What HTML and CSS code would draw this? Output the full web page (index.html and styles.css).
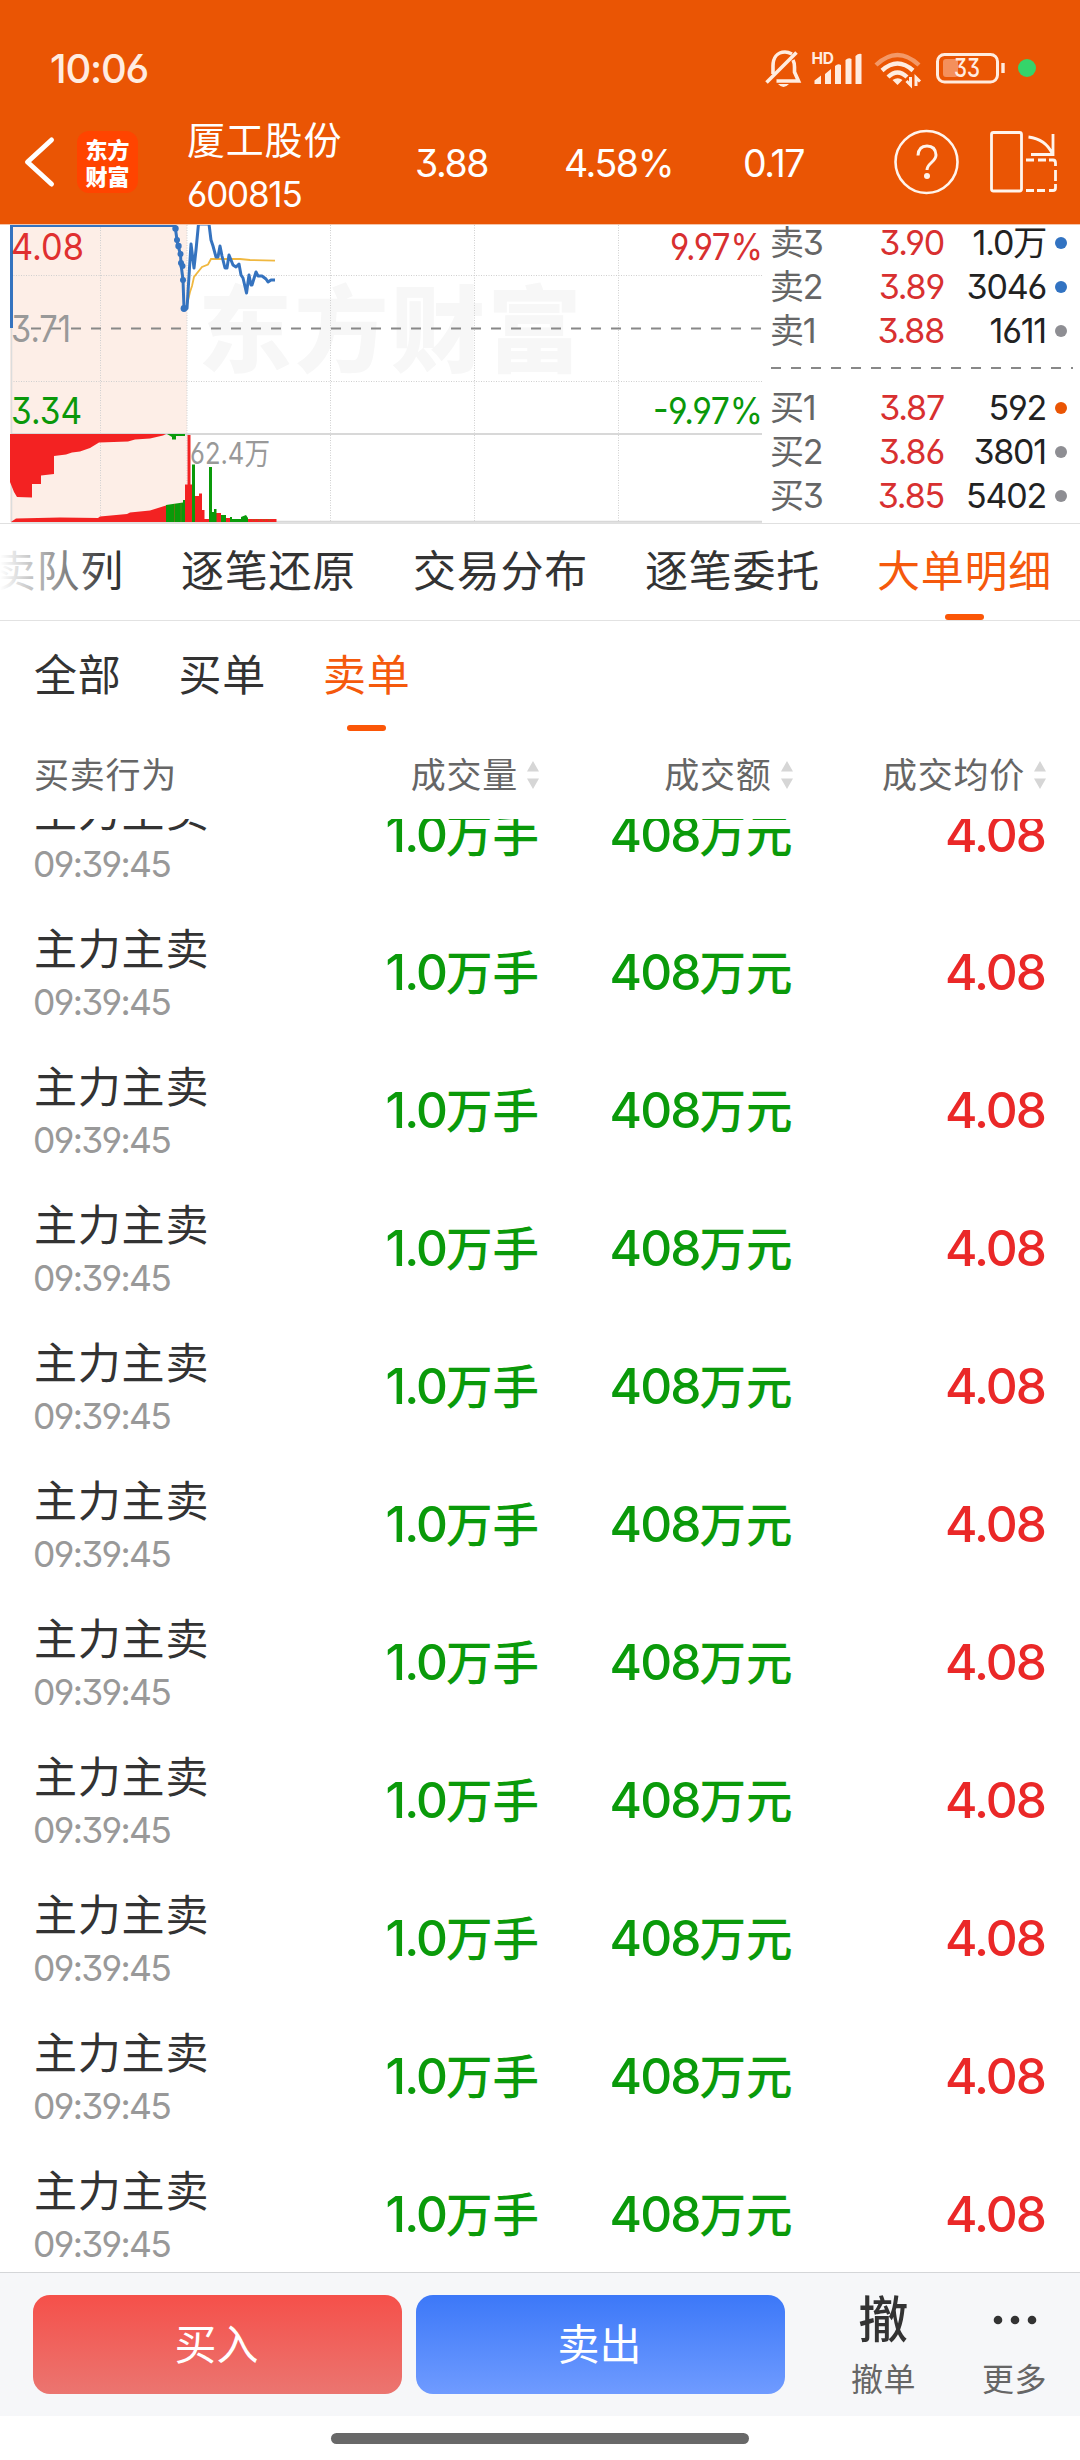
FILE: index.html
```html
<!DOCTYPE html>
<html lang="zh-CN">
<head>
<meta charset="utf-8">
<title>厦工股份 600815</title>
<link rel="stylesheet" href="styles.css">
</head>
<body>
<div class="screen">
  <header class="header">
    <div class="status">
      <span class="clock">10:06</span>
      <svg class="status-icons" width="250" height="44" viewBox="760 46 250 44" fill="none" stroke="#ffece0">
        <g stroke-width="3.6" stroke-linecap="butt">
          <path d="M773 74V66c0-8 4-14 12-14 3 0 5 1 7 2"/>
          <path d="M793 60c1 2 1.500 4 1.500 7v5l4 9h-22"/>
          <path d="M766.500 82.500L796.500 52.500" stroke-width="3.600"/>
          <path d="M778 84h11q-5.500 6-11 0z" fill="#ffece0" stroke="none"/>
        </g>
        <text x="811.500" y="64" class="hd">HD</text>
        <g fill="#ffece0" stroke="none">
          <path d="M814.500 84v-3.500l6.500-5V84zM825 84V74l6-5v15zM835 84V66q3-3 6-1v19zM845.500 84V60q3-3 6-1v25zM855.500 84V56q3-3 6-2v30z"/>
        </g>
        <g stroke-width="4.400">
          <path d="M876 65q21.500-20 43 0" opacity=".45"/>
          <path d="M882 70.500q15.500-14 31 0"/>
          <path d="M888 77q9.500-9 19 0"/>
          <path d="M892.500 80q5.500-3.500 10 0l-5 5z" fill="#ffece0" stroke="none"/>
          <path d="M910.500 77v8l-4-4M916 86v-8.500l4 4" stroke-width="3"/>
        </g>
        <rect x="937.500" y="54.500" width="60" height="27.500" rx="7" stroke-width="3"/>
        <rect x="943" y="59" width="15" height="18" rx="3" fill="#f4905c" stroke="none"/>
        <path d="M1003 63v10" stroke-width="3.400"/>
        <text x="954" y="76.500" class="battery" textLength="26" lengthAdjust="spacingAndGlyphs">33</text>
      </svg>
      <span class="privacy-dot"></span>
    </div>
    <div class="nav">
      <svg class="back" width="40" height="56" viewBox="20 134 40 56" fill="none" stroke="#fff" stroke-width="5" stroke-linecap="round" stroke-linejoin="round"><path d="M51.500 140L27.500 162L51.500 184"/></svg>
      <div class="logo"><span>东方</span><span>财富</span></div>
      <div class="stock"><span class="stock-name">厦工股份</span><span class="stock-code">600815</span></div>
      <span class="quote">3.88</span>
      <span class="quote">4.58%</span>
      <span class="quote">0.17</span>
      <svg width="66" height="66" viewBox="0 0 66 66" fill="none" stroke="#fff4ec" stroke-width="2.600"><circle cx="32.500" cy="33" r="31"/><path d="M24 26.500q.500-9.500 9-9.500t9 9c0 7-9 8-9 15" stroke-width="3"/><circle cx="33" cy="47" r="3" fill="#fff4ec" stroke="none"/></svg>
      <svg width="72" height="66" viewBox="987 129 72 66" fill="none" stroke="#fff4ec" stroke-width="2.800">
        <rect x="991.500" y="132.500" width="30" height="58.500" rx="2"/>
        <path d="M1028.500 137q17 2 24 17M1053 134v20.500h-22"/>
        <path d="M1026 160h8M1038 160h8M1049 160h4q2.500 0 2.500 3v3M1055.500 170v11M1055.500 184v4q0 2.500-2.500 2.500h-4M1045 190.500h-8M1034 190.500h-8"/>
      </svg>
    </div>
  </header>

  <section class="market">
    <svg class="chart" width="764" height="298" viewBox="0 225 764 298">
      <rect x="10" y="225" width="177" height="297" fill="#fdeee7"/>
      <text class="watermark" x="198" y="365">东方财富</text>
      <g stroke="#cfcfcf" stroke-width="1" stroke-dasharray="1 1.500">
        <path d="M100.500 225V521M187 225V521M330.500 225V521M474.500 225V521M618.500 225V521M11 275.500H762M11 381.500H762"/>
      </g>
      <path d="M11.500 225V522" stroke="#dcdcdc" stroke-width="1.500"/>
      <path d="M11 434H762M11 521.800H762" stroke="#d8d8d8" stroke-width="2"/>
      <path d="M31 328.500H762" stroke="#888" stroke-width="2" stroke-dasharray="10 10"/>
      <path d="M10 434V482L14 492L17 497L32 497.500V484H41V475.500L54 474V456L66 454.500L72 452.500L80 451.500L90 448L99 442.500L128 441.500L135 439.500L150 438.500L163 435.500L166 434Z" fill="#f32222"/>
      <path d="M167 434L172 437V439.500H176V436H185V434Z" fill="#0a9a0a"/>
      <path d="M11 522L16 518.500L60 517.500L98 518L100 516.500L127 514L130 512.500L150 510.500L166 505.500V522Z" fill="#f32222"/>
      <path d="M166 522V505L183 502.500V500H185.500V522Z" fill="#0a9a0a"/>
      <path d="M174.500 504V522M181 503V522" stroke="#5d7a14" stroke-width="1"/>
      <path d="M185 522V484.500H187.500V435H190.500V484.500H192V522ZM195 522V496H199V493.500H202V510H204.500V519H209V522ZM216 522V513H221V522ZM226 522V518H230V522ZM248 522V519H276.500V522Z" fill="#f32222"/>
      <path d="M192 522V464.500H195V522ZM209 522V467H212V512H214V509H216.500V522ZM221 522V515H226V522ZM230 522V517H232V519H241V517L246 515L248 518V522Z" fill="#0a9a0a"/>
      <path d="M253 520H270" stroke="#887a10" stroke-width="1" stroke-dasharray="2 3"/>
      <path d="M186 309L190 292L192 286L194 277L202 267L208 264.500L211 259H240L250 260L275 260.700" fill="none" stroke="#f0b840" stroke-width="1.800"/>
      <g fill="none" stroke="#3573bf" stroke-linejoin="round">
        <path d="M11.500 328V225.500H175L177 240L178 246L180.500 254L181 264L183 280L184 308.500L187 308.500L189 276L191 244L194 268L196 250L198.500 224H209L211 240L213 246L216 257H218L220 246L222 256L225 268H227L229 255L233 265L236 267L239 264L241 275L243 278L246.500 293L249 275L251 285L252 285L256 272L258 276L262 276L266 279L268 282L271 280H275" stroke-width="3"/>
      </g>
      <g fill="#3573bf"><circle cx="175.500" cy="228.500" r="3.200"/><circle cx="177" cy="240" r="3"/><circle cx="178.500" cy="246" r="3.200"/><circle cx="180.500" cy="254" r="3"/><circle cx="181" cy="263" r="3"/><circle cx="182.500" cy="266" r="3"/><circle cx="183" cy="280" r="3"/><circle cx="184" cy="308.500" r="3.400"/></g>
      <g class="axis">
        <text x="11" y="260" fill="#e03030" textLength="73" lengthAdjust="spacingAndGlyphs">4.08</text>
        <text x="11" y="342" fill="#999" textLength="60" lengthAdjust="spacingAndGlyphs">3.71</text>
        <text x="11" y="424" fill="#0a980a" textLength="71" lengthAdjust="spacingAndGlyphs">3.34</text>
        <text x="670" y="260" fill="#d83030" textLength="93" lengthAdjust="spacingAndGlyphs">9.97%</text>
        <text x="653" y="424" fill="#0a980a" textLength="110" lengthAdjust="spacingAndGlyphs">-9.97%</text>
      </g>
      <text class="volume" x="190" y="464" fill="#999" textLength="80" lengthAdjust="spacingAndGlyphs">62.4万</text>
    </svg>
    <div class="book">
      <div class="level"><span>卖3</span><b>3.90</b><em>1.0万</em><i class="blue"></i></div>
      <div class="level"><span>卖2</span><b>3.89</b><em>3046</em><i class="blue"></i></div>
      <div class="level"><span>卖1</span><b>3.88</b><em>1611</em><i></i></div>
      <div class="split"></div>
      <div class="level"><span>买1</span><b>3.87</b><em>592</em><i class="orange"></i></div>
      <div class="level"><span>买2</span><b>3.86</b><em>3801</em><i></i></div>
      <div class="level"><span>买3</span><b>3.85</b><em>5402</em><i></i></div>
    </div>
  </section>

  <nav class="tabs">
    <span>卖队列</span><span>逐笔还原</span><span>交易分布</span><span>逐笔委托</span><span class="active">大单明细</span>
  </nav>
  <nav class="filters">
    <span>全部</span><span>买单</span><span class="active">卖单</span>
  </nav>
  <div class="columns">
    <span>买卖行为</span>
    <span>成交量<svg class="sort" width="12" height="30" viewBox="0 0 12 30"><path d="M6 1L12 11.500H0ZM6 29L12 18.500H0Z"/></svg></span>
    <span>成交额<svg class="sort" width="12" height="30" viewBox="0 0 12 30"><path d="M6 1L12 11.500H0ZM6 29L12 18.500H0Z"/></svg></span>
    <span>成交均价<svg class="sort" width="12" height="30" viewBox="0 0 12 30"><path d="M6 1L12 11.500H0ZM6 29L12 18.500H0Z"/></svg></span>
  </div>
  <main class="orders">
    <div class="orders-scroll">
      <div class="order"><div class="who"><span>主力主卖</span><time>09:39:45</time></div><span class="sell">1.0<small>万手</small></span><span class="sell">408<small>万元</small></span><span class="price">4.08</span></div>
      <div class="order"><div class="who"><span>主力主卖</span><time>09:39:45</time></div><span class="sell">1.0<small>万手</small></span><span class="sell">408<small>万元</small></span><span class="price">4.08</span></div>
      <div class="order"><div class="who"><span>主力主卖</span><time>09:39:45</time></div><span class="sell">1.0<small>万手</small></span><span class="sell">408<small>万元</small></span><span class="price">4.08</span></div>
      <div class="order"><div class="who"><span>主力主卖</span><time>09:39:45</time></div><span class="sell">1.0<small>万手</small></span><span class="sell">408<small>万元</small></span><span class="price">4.08</span></div>
      <div class="order"><div class="who"><span>主力主卖</span><time>09:39:45</time></div><span class="sell">1.0<small>万手</small></span><span class="sell">408<small>万元</small></span><span class="price">4.08</span></div>
      <div class="order"><div class="who"><span>主力主卖</span><time>09:39:45</time></div><span class="sell">1.0<small>万手</small></span><span class="sell">408<small>万元</small></span><span class="price">4.08</span></div>
      <div class="order"><div class="who"><span>主力主卖</span><time>09:39:45</time></div><span class="sell">1.0<small>万手</small></span><span class="sell">408<small>万元</small></span><span class="price">4.08</span></div>
      <div class="order"><div class="who"><span>主力主卖</span><time>09:39:45</time></div><span class="sell">1.0<small>万手</small></span><span class="sell">408<small>万元</small></span><span class="price">4.08</span></div>
      <div class="order"><div class="who"><span>主力主卖</span><time>09:39:45</time></div><span class="sell">1.0<small>万手</small></span><span class="sell">408<small>万元</small></span><span class="price">4.08</span></div>
      <div class="order"><div class="who"><span>主力主卖</span><time>09:39:45</time></div><span class="sell">1.0<small>万手</small></span><span class="sell">408<small>万元</small></span><span class="price">4.08</span></div>
      <div class="order"><div class="who"><span>主力主卖</span><time>09:39:45</time></div><span class="sell">1.0<small>万手</small></span><span class="sell">408<small>万元</small></span><span class="price">4.08</span></div>
    </div>
  </main>
  <footer class="actions">
    <button class="btn buy">买入</button>
    <button class="btn sell-btn">卖出</button>
    <div class="action"><span class="glyph">撤</span><span>撤单</span></div>
    <div class="action"><span class="glyph"><svg width="44" height="10" viewBox="0 0 44 10" fill="#333"><circle cx="5" cy="5" r="4.300"/><circle cx="22" cy="5" r="4.300"/><circle cx="39" cy="5" r="4.300"/></svg></span><span>更多</span></div>
  </footer>
  <div class="gesture"><div class="pill"></div></div>
</div>
</body>
</html>
```
FILE: styles.css
```css
* { box-sizing: border-box; }
body {
  margin: 0;
  background: #fff;
  color: #333;
  font-family: Inter, "Noto Sans CJK SC", sans-serif;
  font-feature-settings: "cv03", "cv04", "cv09";
  white-space: nowrap;
}
.screen { width: 1080px; height: 2460px; display: flex; flex-direction: column; overflow: hidden; }

.header { height: 225px; flex: none; background: #ea5504; color: #fff; border-bottom: 1px solid #f5c4a8; }
.status { height: 99px; padding: 37px 44px 0 50px; display: flex; align-items: center; color: #ffece0; }
.clock { font-size: 40px; font-weight: 500; letter-spacing: -1.2px; line-height: 62px; padding-top: 1px; flex: 1; }
.status-icons { display: block; }
.hd { font-size: 15.500px; font-weight: 700; fill: #ffece0; stroke: none; letter-spacing: -0.3px; }
.battery { font-size: 25px; font-weight: 500; fill: #ffece0; stroke: none; }
.privacy-dot { width: 18px; height: 18px; border-radius: 50%; background: #35d46a; margin-left: 8px; }
.nav {
  height: 126px;
  display: grid;
  grid-template-columns: 77px 110px 228px 149px 179px 151px 93px 1fr;
  align-items: center;
}
.back { margin-left: 20px; }
.logo {
  width: 61px; height: 62px; border-radius: 12px; background: #ff4400;
  display: flex; flex-direction: column; align-items: center; justify-content: center;
  font: 900 22px/27px "Noto Sans CJK SC", sans-serif;
}
.stock { display: flex; flex-direction: column; padding-top: 9px; }
.stock-name { font-size: 38px; letter-spacing: 0.8px; line-height: 54px; }
.stock-code { font-size: 35px; letter-spacing: -1.200px; line-height: 54px; }
.quote { font-size: 37.500px; letter-spacing: -1.400px; padding-top: 2px; }

.market { height: 299px; flex: none; display: flex; border-bottom: 1px solid #e0e0e0; }
.chart { display: block; flex: none; }
.watermark { font: 900 94px "Noto Sans CJK SC", sans-serif; letter-spacing: 2.500px; fill: #f7f7f7; }
.axis { font-size: 37px; }
.volume { font-size: 29.500px; }
.book { flex: 1; display: flex; flex-direction: column; }
.level {
  height: 44px; line-height: 44px; padding-left: 6px;
  display: grid; grid-template-columns: 80px 94px 102px 20px; align-items: center;
  font-size: 34px; letter-spacing: -1.200px;
}
.level span { color: #666; }
.level b { font-weight: 400; color: #d83030; text-align: right; }
.level em { font-style: normal; color: #222; text-align: right; }
.level i { width: 12px; height: 12px; border-radius: 50%; background: #8e8e93; margin-left: 9px; }
.level i.blue { background: #3273c2; }
.level i.orange { background: #ea5504; }
.book .level:first-child { margin-top: -4px; }
.split {
  height: 33px; margin: 0 7px 0 7px;
  background: repeating-linear-gradient(90deg, #888 0 10px, transparent 10px 20px) 0 14px / 100% 2px no-repeat;
}

.tabs {
  height: 97px; flex: none; display: flex; gap: 57px; justify-content: flex-end; padding-right: 28px;
  border-bottom: 1px solid #e2e2e2; overflow: hidden; position: relative;
}
.tabs::before {
  content: ""; position: absolute; left: 0; top: 0; width: 110px; height: 95px; z-index: 1;
  background: linear-gradient(90deg, #fff, rgba(255, 255, 255, 0));
}
.tabs span, .filters span { font-size: 43px; letter-spacing: 0.750px; position: relative; }
.tabs span { line-height: 94px; }
.tabs .active, .filters .active { color: #f5590c; }
.tabs .active::after, .filters .active::after {
  content: ""; position: absolute; left: 50%; bottom: 0; width: 39px; height: 6px; margin-left: -20px;
  border-radius: 3px; background: #fb5607;
}
.filters { height: 110px; flex: none; display: flex; gap: 57px; padding-left: 34px; }
.filters span { line-height: 108px; height: 110px; }

.columns, .order { display: grid; grid-template-columns: 252px 253px 253.500px 253.500px; padding-left: 34px; }
.columns { height: 88px; flex: none; font-size: 35px; letter-spacing: 0.750px; color: #666; line-height: 88px; }
.columns span { display: flex; align-items: center; justify-content: flex-end; gap: 9px; padding: 0 0 2px 0; }
.columns span:first-child { justify-content: flex-start; }
.sort { fill: #d6d6d6; }
.orders { height: 1453px; flex: none; overflow: hidden; }
.orders-scroll { margin-top: -54px; }
.order { height: 138px; line-height: 139px; font-size: 49.500px; font-weight: 500; letter-spacing: -1.900px; text-align: right; }
.order small { font-size: 46.500px; letter-spacing: 0; }
.who { padding-top: 19px; display: flex; flex-direction: column; text-align: left; font-weight: 400; letter-spacing: 0.800px; }
.who span { font-size: 43px; line-height: 54px; }
.who time { font-size: 35.500px; line-height: 54px; color: #999; letter-spacing: -1.700px; margin-left: -1px; }
.sell { color: #0a9a0a; }
.price { color: #ea2828; padding-right: 1px; }

.actions { height: 144px; flex: none; background: #f6f7f9; border-top: 1px solid #d4d6d8; display: flex; align-items: center; padding-left: 33px; }
.btn { width: 369px; height: 99px; margin: 0 14px 0 0; padding: 0 2px 5px 0; border: 0; border-radius: 17px; color: #fff; font: 42px/94px "Noto Sans CJK SC", sans-serif; }
.buy { background: linear-gradient(#f5504a, #eb7570); }
.sell-btn { background: linear-gradient(#3c78f8, #6f9bff); }
.action { width: 131px; display: flex; flex-direction: column; align-items: center; font-size: 32px; letter-spacing: 0.600px; line-height: 40px; color: #666; }
.btn + .action { margin-left: 19px; }
.glyph { height: 70px; padding-bottom: 10px; display: flex; align-items: center; font-size: 50px; font-weight: 500; color: #333; }
.gesture { flex: 1; display: flex; justify-content: center; padding-top: 17px; }
.pill { width: 418px; height: 11px; border-radius: 6px; background: #686868; }
```
